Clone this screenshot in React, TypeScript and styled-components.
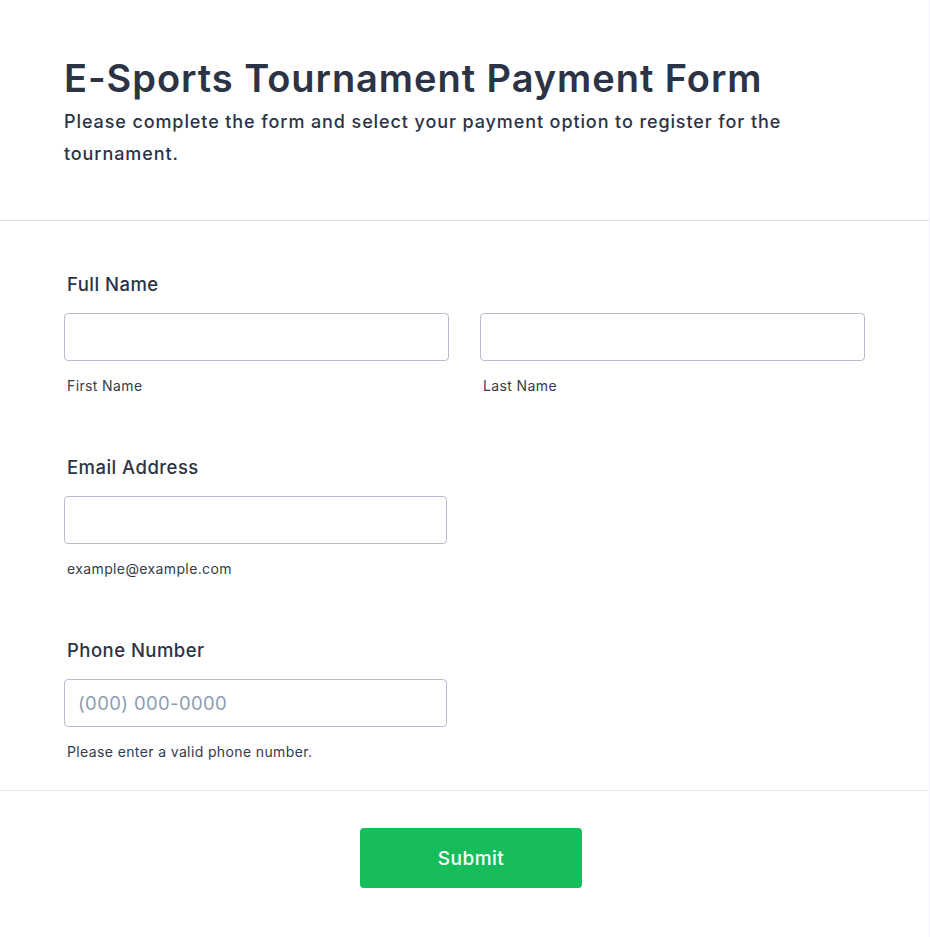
import React from "react";
import styled, { createGlobalStyle } from "styled-components";

const GlobalStyle = createGlobalStyle`
  html, body {
    margin: 0;
    padding: 0;
    background: #f3f3fe;
  }
  body {
    font-family: Inter, "Noto Sans", "Liberation Sans", sans-serif;
    color: #2c3345;
  }
`;

const Card = styled.form`
  width: calc(100% - 1px);
  min-height: 937px;
  background: #ffffff;
  display: flex;
  flex-direction: column;
`;

const Header = styled.header`
  padding: 50px 64px 50px;
  border-bottom: 1px solid #dedee8;
`;

const Title = styled.h1`
  margin: 0;
  font-size: 38px;
  line-height: 56px;
  font-weight: 600;
  color: #2c3345;
  letter-spacing: 0.025em;
`;

const Subtitle = styled.p`
  margin: 0;
  max-width: 801px;
  font-size: 18px;
  line-height: 32px;
  font-weight: 500;
  color: #2c3345;
  letter-spacing: 0.05em;
`;

const Fields = styled.section`
  display: flex;
  flex-direction: column;
  gap: 59px;
  padding: 51px 64px 28px;
  border-bottom: 1px solid #e6e6f2;
`;

const Field = styled.div`
  display: flex;
  flex-direction: column;
`;

const Label = styled.label`
  margin: 0 0 17px 3px;
  font-size: 18.5px;
  line-height: 24px;
  font-weight: 500;
  color: #2c3345;
  letter-spacing: 0.025em;
`;

const NameRow = styled.div`
  display: grid;
  grid-template-columns: 385px 385px;
  column-gap: 31px;
`;

const InputGroup = styled.div<{ $width?: number }>`
  display: flex;
  flex-direction: column;
  width: ${({ $width }) => ($width ? `${$width}px` : "auto")};
`;

const TextInput = styled.input`
  box-sizing: border-box;
  width: 100%;
  height: 48px;
  padding: 0 12px 0 13px;
  border: 1px solid #b8bdd0;
  border-radius: 4px;
  background: #ffffff;
  font-family: inherit;
  font-size: 18.5px;
  letter-spacing: 0.02em;
  color: #2c3345;
  outline: none;

  &::placeholder {
    color: #8f9bb0;
  }
`;

const Sublabel = styled.span`
  margin: 15px 0 0 3px;
  font-size: 14px;
  line-height: 20px;
  font-weight: 400;
  color: #343c4e;
  letter-spacing: 0.027em;
`;

const Footer = styled.footer`
  flex: 1;
  display: flex;
  justify-content: center;
  padding: 37px 0 49px 13px;
  background: #ffffff;
`;

const SubmitButton = styled.button`
  width: 222px;
  height: 60px;
  border: none;
  border-radius: 4px;
  background: #18bd5b;
  color: #ffffff;
  font-family: inherit;
  font-size: 19px;
  font-weight: 500;
  letter-spacing: 0.025em;
  cursor: pointer;
`;

export default function App() {
  return (
    <>
      <GlobalStyle />
      <Card onSubmit={(e) => e.preventDefault()}>
        <Header>
          <Title>E-Sports Tournament Payment Form</Title>
          <Subtitle>
            Please complete the form and select your payment option to register
            for the tournament.
          </Subtitle>
        </Header>

        <Fields>
          <Field>
            <Label>Full Name</Label>
            <NameRow>
              <InputGroup>
                <TextInput type="text" />
                <Sublabel>First Name</Sublabel>
              </InputGroup>
              <InputGroup>
                <TextInput type="text" />
                <Sublabel>Last Name</Sublabel>
              </InputGroup>
            </NameRow>
          </Field>

          <Field>
            <Label>Email Address</Label>
            <InputGroup $width={383}>
              <TextInput type="email" />
              <Sublabel>example@example.com</Sublabel>
            </InputGroup>
          </Field>

          <Field>
            <Label>Phone Number</Label>
            <InputGroup $width={383}>
              <TextInput type="tel" placeholder="(000) 000-0000" />
              <Sublabel>Please enter a valid phone number.</Sublabel>
            </InputGroup>
          </Field>
        </Fields>

        <Footer>
          <SubmitButton type="submit">Submit</SubmitButton>
        </Footer>
      </Card>
    </>
  );
}
